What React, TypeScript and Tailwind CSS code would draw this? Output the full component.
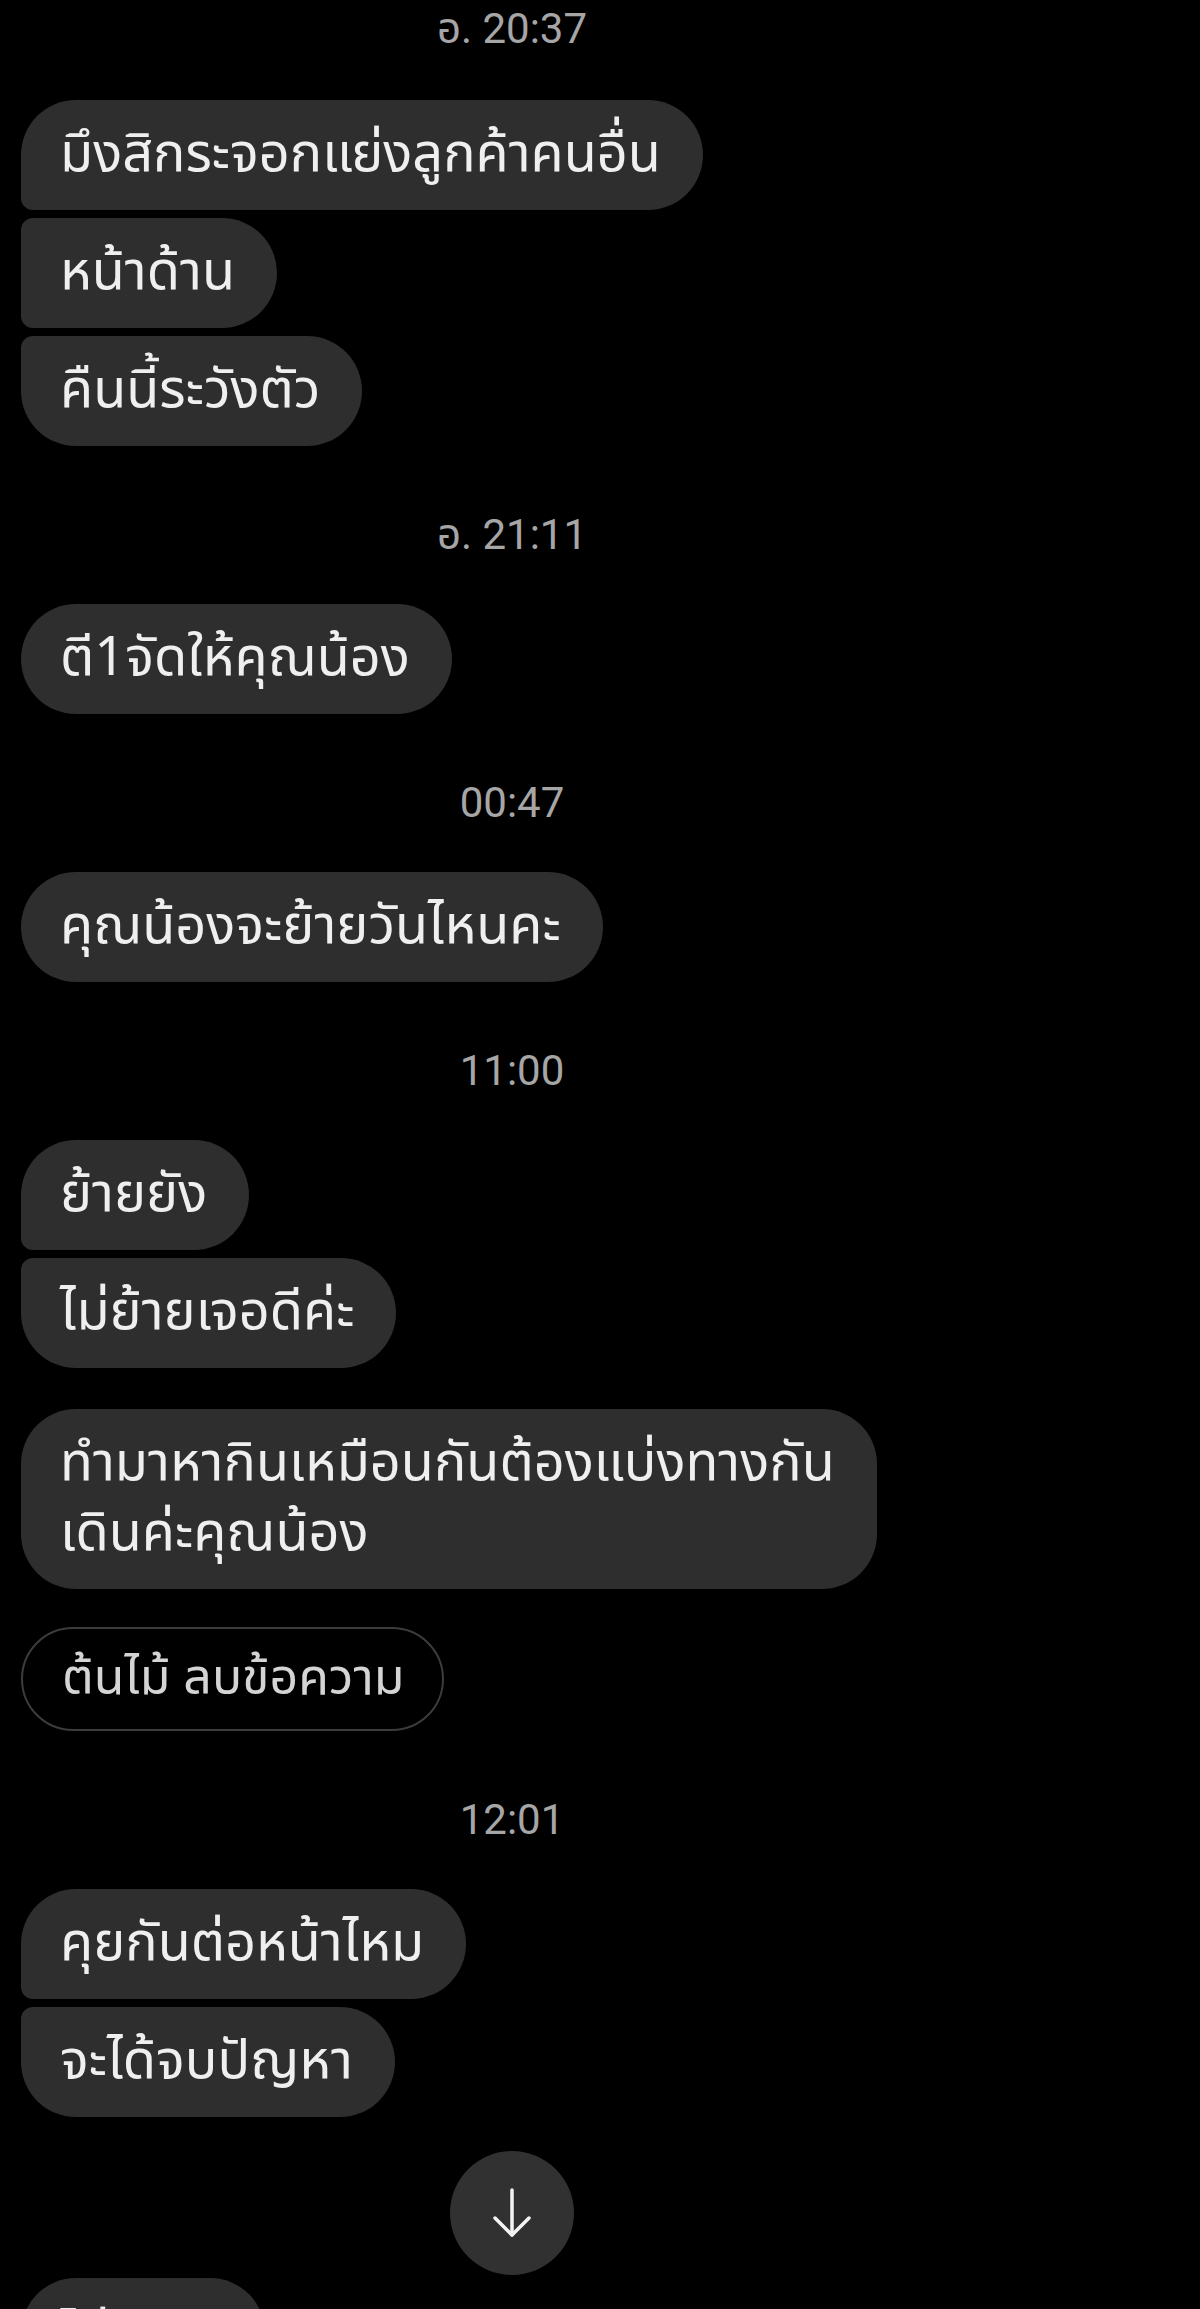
import React from "react";

type Shape = "single" | "first" | "middle" | "last";

const shapeClass: Record<Shape, string> = {
  single: "rounded-[55px]",
  first: "rounded-tl-[55px] rounded-tr-[55px] rounded-br-[55px] rounded-bl-[12px]",
  middle: "rounded-tl-[12px] rounded-tr-[55px] rounded-br-[55px] rounded-bl-[12px]",
  last: "rounded-tl-[12px] rounded-tr-[55px] rounded-br-[55px] rounded-bl-[55px]",
};

const thai = "[font-family:'Noto_Sans_Thai','Noto_Sans',sans-serif]";

function Bubble({
  children,
  shape,
  className = "",
  pad = "py-[20px]",
}: {
  children: React.ReactNode;
  shape: Shape;
  className?: string;
  pad?: string;
}) {
  return (
    <div className={`flex ${className}`}>
      <div
        className={`bg-[#2e2e2e] text-[#efefef] text-[54px] leading-[70px] ${pad} pl-[39px] pr-[42px] whitespace-nowrap ${thai} ${shapeClass[shape]}`}
      >
        {children}
      </div>
    </div>
  );
}

function Stamp({ children, first = false }: { children: React.ReactNode; first?: boolean }) {
  return (
    <div
      className={`flex justify-center h-[46px] leading-[46px] text-[42px] text-[#a6a6a6] [font-family:Roboto,'Noto_Sans_Thai',sans-serif] ${
        first ? "mt-[6px] mb-[48px]" : "mt-[66px] mb-[46px]"
      }`}
    >
      {children}
    </div>
  );
}

export default function App() {
  return (
    <div className="h-[2309px] w-[1200px] overflow-hidden bg-black">
      <div className="w-[1024px] pl-[21px] pr-[21px] flex flex-col">
        <Stamp first>อ. 20:37</Stamp>
        <div className="flex flex-col gap-[8px]">
          <Bubble shape="first">มึงสิกระจอกแย่งลูกค้าคนอื่น</Bubble>
          <Bubble shape="middle">หน้าด้าน</Bubble>
          <Bubble shape="last">คืนนี้ระวังตัว</Bubble>
        </div>

        <Stamp>อ. 21:11</Stamp>
        <Bubble shape="single">ตี1จัดให้คุณน้อง</Bubble>

        <Stamp>00:47</Stamp>
        <Bubble shape="single">คุณน้องจะย้ายวันไหนคะ</Bubble>

        <Stamp>11:00</Stamp>
        <div className="flex flex-col gap-[8px]">
          <Bubble shape="first">ย้ายยัง</Bubble>
          <Bubble shape="last">ไม่ย้ายเจอดีค่ะ</Bubble>
        </div>

        <Bubble shape="single" className="mt-[41px]">
          ทำมาหากินเหมือนกันต้องแบ่งทางกัน
          <br />
          เดินค่ะคุณน้อง
        </Bubble>

        <div className="flex mt-[38px]">
          <div
            className={`border-[2px] border-[#3c3c3c] rounded-full text-[#d4d4d4] text-[50px] leading-[70px] py-[15px] pl-[39px] pr-[38px] whitespace-nowrap ${thai}`}
          >
            ต้นไม้ ลบข้อความ
          </div>
        </div>

        <Stamp>12:01</Stamp>
        <div className="flex flex-col gap-[8px]">
          <Bubble shape="first">คุยกันต่อหน้าไหม</Bubble>
          <Bubble shape="last">จะได้จบปัญหา</Bubble>
        </div>

        <div className="flex justify-center mt-[34px] -ml-[21px] -mr-[21px]">
          <div className="w-[124px] h-[124px] rounded-full bg-[#313131] flex items-center justify-center">
            <svg width="48" height="52" viewBox="0 0 48 52" fill="none" stroke="#f4f4f4" strokeWidth="3.5" strokeLinecap="round" strokeLinejoin="round">
              <path d="M24 3 V48" />
              <path d="M7 31 L24 48 L41 31" />
            </svg>
          </div>
        </div>

        <Bubble shape="first" className="mt-[3px]" pad="pt-[23px] pb-[20px]">
          ไม่ทราบ
        </Bubble>
      </div>
    </div>
  );
}
